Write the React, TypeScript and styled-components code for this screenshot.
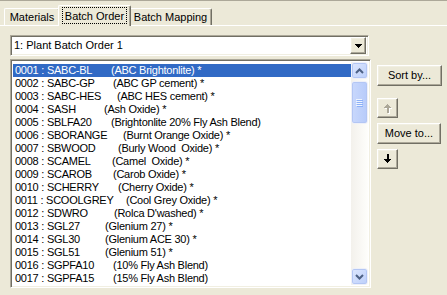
import styled, { createGlobalStyle } from 'styled-components'

const GlobalStyle = createGlobalStyle`
  html, body {
    margin: 0;
    padding: 0;
  }
  body {
    width: 447px;
    height: 295px;
    overflow: hidden;
    background: #ece9d8;
    font-family: "Liberation Sans", Arial, sans-serif;
    font-size: 11px;
    color: #000;
  }
`

const Window = styled.div`
  width: 447px;
  height: 295px;
  box-sizing: border-box;
  background: #ece9d8;
  border-top: 1px solid #aca899;
  display: flex;
  flex-direction: column;
  overflow: hidden;
`

const TabStrip = styled.div`
  display: flex;
  align-items: flex-end;
  height: 24px;
  padding-left: 4px;
`

const Tab = styled.div<{ $w: number; $active?: boolean }>`
  box-sizing: border-box;
  width: ${p => p.$w}px;
  height: ${p => (p.$active ? 21 : 17)}px;
  margin: ${p => (p.$active ? '0 -2px -1px' : '0')};
  position: relative;
  z-index: ${p => (p.$active ? 2 : 1)};
  background: #ece9d8;
  border-top: 1px solid #fff;
  border-left: 1px solid #fff;
  border-right: 1px solid #716f64;
  border-radius: 2px 2px 0 0;
  box-shadow: inset -1px 0 #aca899;
  display: flex;
  align-items: center;
  justify-content: center;
  padding-bottom: ${p => (p.$active ? 2 : 0)}px;
  white-space: nowrap;
`

const FocusLabel = styled.span`
  border: 1px dotted #000;
  padding: 2px 2px 1px;
  line-height: 12px;
`

const Panel = styled.div`
  flex: 1;
  border-top: 1px solid #fff;
  padding: 9px 0 0 10px;
`

const Sunken = styled.div`
  box-sizing: border-box;
  background: #fff;
  border: 1px solid;
  border-color: #aca899 #fff #fff #aca899;
  box-shadow: inset 1px 1px #716f64, inset -1px -1px #f1efe2;
`

const Combo = styled(Sunken)`
  width: 359px;
  height: 21px;
  display: flex;
  align-items: center;
  padding: 2px 2px 2px 3px;
`

const ComboText = styled.div`
  flex: 1;
  line-height: 13px;
`

const Raised = styled.div`
  box-sizing: border-box;
  background: #ece9d8;
  border: 1px solid;
  border-color: #fff #716f64 #716f64 #fff;
  box-shadow: inset -1px -1px #aca899, inset 1px 1px #f1efe2;
  display: flex;
  align-items: center;
  justify-content: center;
`

const DropButton = styled(Raised)`
  width: 16px;
  height: 17px;
`

const Body = styled.div`
  display: flex;
  margin-top: 3px;
`

const ListBox = styled(Sunken)`
  width: 361px;
  height: 229px;
  padding: 2px;
  display: flex;
`

const Rows = styled.div`
  flex: 1;
  padding-top: 2px;
  overflow: hidden;
`

const Row = styled.div<{ $selected?: boolean }>`
  height: 13px;
  line-height: 13px;
  padding-left: 2px;
  white-space: pre;
  letter-spacing: -0.25px;
  background: ${p => (p.$selected ? '#316ac5' : 'transparent')};
  color: ${p => (p.$selected ? '#fff' : '#000')};
`

const Code = styled.span<{ $w: number }>`
  display: inline-block;
  width: ${p => p.$w}px;
`

const ScrollBar = styled.div`
  width: 17px;
  display: flex;
  flex-direction: column;
  background: linear-gradient(to right, #f3f1ec, #fefefb);
`

const ScrollButton = styled.div`
  box-sizing: border-box;
  height: 17px;
  border: 1px solid #eef0f8;
  border-radius: 3px;
  background: linear-gradient(135deg, #dde7fe, #bccffa);
  box-shadow: inset 0 0 0 1px #b3c6f4;
  display: flex;
  align-items: center;
  justify-content: center;
`

const Track = styled.div`
  flex: 1;
  padding-top: 2px;
`

const Thumb = styled(ScrollButton)`
  height: 43px;
  background: linear-gradient(to right, #c9d8fc, #b7cbfa);
`

const Buttons = styled.div`
  margin-left: 6px;
  padding-top: 6px;
  display: flex;
  flex-direction: column;
  align-items: flex-start;
`

const PushButton = styled(Raised)<{ $w: number; $h?: number; $gap?: number }>`
  width: ${p => p.$w}px;
  height: ${p => p.$h ?? 21}px;
  margin-top: ${p => p.$gap ?? 0}px;
  line-height: 13px;
`

const Chevron = ({ up }: { up?: boolean }) => (
  <svg width="9" height="6" viewBox="0 0 9 6">
    <path
      d={up ? 'M1 5 L4.5 1.5 L8 5' : 'M1 1 L4.5 4.5 L8 1'}
      fill="none"
      stroke="#4d6185"
      strokeWidth="2"
    />
  </svg>
)

const Grip = () => (
  <svg width="7" height="8" viewBox="0 0 7 8" shapeRendering="crispEdges">
    {[0, 2, 4, 6].map(y => (
      <g key={y}>
        <rect x="0" y={y} width="6" height="1" fill="#eef4fe" />
        <rect x="1" y={y + 1} width="6" height="1" fill="#8cb0f8" />
      </g>
    ))}
  </svg>
)

const ArrowDown = () => (
  <svg width="7" height="10" viewBox="0 0 7 10" shapeRendering="crispEdges">
    <rect x="2.5" y="0" width="2" height="6" fill="#000" />
    <polygon points="0,5 7,5 3.5,9.5" fill="#000" />
  </svg>
)

const ArrowUpDisabled = () => (
  <svg width="8" height="11" viewBox="0 0 8 11" shapeRendering="crispEdges">
    <g fill="#fff" transform="translate(1 1)">
      <rect x="2.5" y="4" width="2" height="6" />
      <polygon points="0,5 7,5 3.5,0.5" />
    </g>
    <g fill="#aca899">
      <rect x="2.5" y="4" width="2" height="6" />
      <polygon points="0,5 7,5 3.5,0.5" />
    </g>
  </svg>
)

const DropTriangle = () => (
  <svg width="7" height="4" viewBox="0 0 7 4" shapeRendering="crispEdges">
    <polygon points="0,0 7,0 3.5,4" fill="#000" />
  </svg>
)

const rows: [string, string, number][] = [
  ['0001 : SABC-BL', '(ABC Brightonlite) *', 110],
  ['0002 : SABC-GP', '(ABC GP cement) *', 112],
  ['0003 : SABC-HES', '(ABC HES cement) *', 116],
  ['0004 : SASH', '(Ash Oxide) *', 103],
  ['0005 : SBLFA20', '(Brightonlite 20% Fly Ash Blend)', 110],
  ['0006 : SBORANGE', '(Burnt Orange Oxide) *', 122],
  ['0007 : SBWOOD', '(Burly Wood  Oxide) *', 117],
  ['0008 : SCAMEL', '(Camel  Oxide) *', 111],
  ['0009 : SCAROB', '(Carob Oxide) *', 112],
  ['0010 : SCHERRY', '(Cherry Oxide) *', 117],
  ['0011 : SCOOLGREY', '(Cool Grey Oxide) *', 125],
  ['0012 : SDWRO', "(Rolca D'washed) *", 113],
  ['0013 : SGL27', '(Glenium 27) *', 104],
  ['0014 : SGL30', '(Glenium ACE 30) *', 104],
  ['0015 : SGL51', '(Glenium 51) *', 104],
  ['0016 : SGPFA10', '(10% Fly Ash Blend)', 112],
  ['0017 : SGPFA15', '(15% Fly Ash Blend)', 112],
]

// text starts at x=14 in the page, description columns are given in page x
const TEXT_LEFT = 14

export default function App() {
  return (
    <Window>
      <GlobalStyle />
      <TabStrip>
        <Tab $w={56}>Materials</Tab>
        <Tab $w={73} $active>
          <FocusLabel>Batch Order</FocusLabel>
        </Tab>
        <Tab $w={83}>Batch Mapping</Tab>
      </TabStrip>
      <Panel>
        <Combo>
          <ComboText>1: Plant Batch Order 1</ComboText>
          <DropButton>
            <DropTriangle />
          </DropButton>
        </Combo>
        <Body>
          <ListBox>
            <Rows>
              {rows.map(([code, desc, at], i) => (
                <Row key={code} $selected={i === 0}>
                  <Code $w={at - TEXT_LEFT}>{code}</Code>
                  {desc}
                </Row>
              ))}
            </Rows>
            <ScrollBar>
              <ScrollButton>
                <Chevron up />
              </ScrollButton>
              <Track>
                <Thumb>
                  <Grip />
                </Thumb>
              </Track>
              <ScrollButton>
                <Chevron />
              </ScrollButton>
            </ScrollBar>
          </ListBox>
          <Buttons>
            <PushButton $w={65}>Sort by...</PushButton>
            <PushButton $w={21} $h={20} $gap={12}>
              <ArrowUpDisabled />
            </PushButton>
            <PushButton $w={64} $gap={5}>Move to...</PushButton>
            <PushButton $w={21} $h={20} $gap={5}>
              <ArrowDown />
            </PushButton>
          </Buttons>
        </Body>
      </Panel>
    </Window>
  )
}
